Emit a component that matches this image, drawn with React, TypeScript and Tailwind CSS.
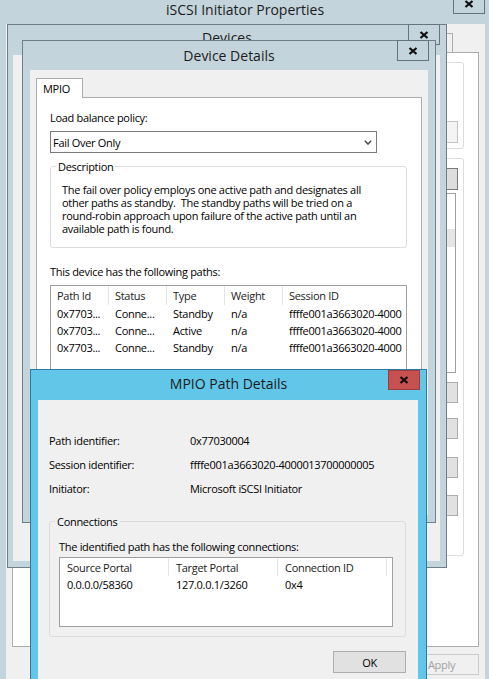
import React from 'react';

type WinProps = {
  pos: string;
  title: string;
  active?: boolean;
  barCls: string;
  titleCls: string;
  closeCls: string;
  clientCls: string;
  children?: React.ReactNode;
};

const CloseGlyph = () => (
  <svg width="10" height="8" viewBox="0 0 10 8" className="block">
    <path d="M1.5 1 L8.5 7 M8.5 1 L1.5 7" stroke="#101010" strokeWidth="2.3" fill="none" />
  </svg>
);

const Chevron = () => (
  <svg width="8" height="5" viewBox="0 0 8 5" className="block">
    <path d="M0.8 0.8 L4 4 L7.2 0.8" stroke="#4a4a4a" strokeWidth="1.5" fill="none" />
  </svg>
);

function Win({ pos, title, active, barCls, titleCls, closeCls, clientCls, children }: WinProps) {
  return (
    <div className={`absolute isolate flex flex-col border ${active ? 'border-[#2a7da0] bg-[#62c6e8]' : 'border-[#6f7f87] bg-[#c3d4dc]'} ${pos}`}>
      <div className={`grid shrink-0 grid-cols-[1fr_auto_1fr] items-start ${barCls}`}>
        <div />
        <div className={`whitespace-nowrap text-[14px] leading-[20px] tracking-normal text-[#1b1b1b] ${titleCls}`}>{title}</div>
        <div className={`flex justify-end ${closeCls}`}>
          <div
            className={
              active
                ? 'flex h-[20px] w-[32px] items-center justify-center border border-[#9c3c3c] bg-[#c75050]'
                : 'flex h-[21px] w-[32px] items-center justify-center border border-[#65747c] bg-[#c3d4dc]'
            }
          >
            <CloseGlyph />
          </div>
        </div>
      </div>
      <div className={`min-h-0 flex-1 overflow-hidden bg-[#f0f0f0] ${clientCls}`}>{children}</div>
    </div>
  );
}

function Btn({ label, cls }: { label?: string; cls: string }) {
  return <div className={`flex shrink-0 items-center justify-center border ${cls}`}>{label}</div>;
}

const pathCols = ['Path Id', 'Status', 'Type', 'Weight', 'Session ID'];
const pathRows = [
  ['0x7703...', 'Conne...', 'Standby', 'n/a', 'ffffe001a3663020-4000'],
  ['0x7703...', 'Conne...', 'Active', 'n/a', 'ffffe001a3663020-4000'],
  ['0x7703...', 'Conne...', 'Standby', 'n/a', 'ffffe001a3663020-4000'],
];

const connCols = ['Source Portal', 'Target Portal', 'Connection ID'];
const connRows = [['0.0.0.0/58360', '127.0.0.1/3260', '0x4']];

export default function App() {
  return (
    <div className="relative h-[679px] w-[489px] overflow-hidden bg-[#c3d4dc] font-['Open_Sans','Noto_Sans',sans-serif] text-[11px] leading-[13px] tracking-[-0.3px] text-black">
      {/* iSCSI Initiator Properties */}
      <Win
        pos="left-[-2px] top-[-8px] h-[720px] w-[494px]"
        title="iSCSI Initiator Properties"
        barCls="h-[31px]"
        titleCls="mt-[7px]"
        closeCls="mr-[6px]"
        clientCls="ml-[7px] mr-[6px]"
      >
        <div className="flex flex-col px-[6px] pt-[9px]">
          {/* tab strip, mostly covered by the Devices window */}
          <div className="flex h-[19px]">
            <div className="relative z-10 h-[20px] w-[54px] border border-b-0 border-[#acacac] bg-white" />
            <div className="h-[19px] w-[62px] border border-b-0 border-l-0 border-[#acacac]" />
            <div className="h-[19px] w-[96px] border border-b-0 border-l-0 border-[#acacac]" />
            <div className="h-[19px] w-[118px] border border-b-0 border-l-0 border-[#acacac]" />
            <div className="h-[19px] w-[50px] border border-b-0 border-l-0 border-[#acacac]" />
            <div className="h-[19px] w-[61px] border border-b-0 border-l-0 border-[#acacac]" />
          </div>
          <div className="flex h-[595px] flex-col border border-[#acacac] bg-white pl-[7px] pr-[14px] pt-[9px]">
            <div className="flex h-[87px] flex-col items-end justify-end rounded-[3px] border border-[#dcdcdc] pb-[5px] pr-[5px]">
              <Btn cls="h-[22px] w-[90px] border-[#c4c4c4] bg-[#f4f4f4]" />
            </div>
            <div className="mt-[9px] flex h-[398px] flex-col items-end rounded-[3px] border border-[#dcdcdc] pr-[5px]">
              <Btn cls="mt-[9px] h-[22px] w-[75px] border-[#7a7a7a] bg-[#dddddd]" />
              <div className="mr-[2px] mt-[3px] h-[180px] w-[420px] border border-[#a0a0a0] bg-white pt-[35px]">
                <div className="h-[18px] bg-[#e5e5e5]" />
              </div>
              <Btn cls="mt-[9px] h-[21px] w-[75px] border-[#adadad] bg-[#e1e1e1]" />
              <Btn cls="mt-[15px] h-[21px] w-[75px] border-[#adadad] bg-[#e1e1e1]" />
              <Btn cls="mt-[18px] h-[21px] w-[75px] border-[#adadad] bg-[#e1e1e1]" />
              <Btn cls="mt-[17px] h-[21px] w-[75px] border-[#adadad] bg-[#e1e1e1]" />
            </div>
          </div>
          <div className="mt-[7px] flex justify-end gap-[6px]">
            <Btn cls="h-[21px] w-[75px] border-[#adadad] bg-[#e1e1e1]" />
            <Btn cls="h-[21px] w-[75px] border-[#adadad] bg-[#e1e1e1]" />
            <Btn label="Apply" cls="h-[21px] w-[75px] border-[#cbcbcb] bg-[#f0f0f0] text-[#a0a0a0]" />
          </div>
        </div>
      </Win>

      {/* Devices */}
      <Win
        pos="left-[7px] top-[24px] h-[544px] w-[440px]"
        title="Devices"
        barCls="h-[30px]"
        titleCls="mt-[3px]"
        closeCls="mr-[6px] -mt-[1px]"
        clientCls="mb-[6px] ml-[5px] mr-[6px]"
      />

      {/* Device Details */}
      <Win
        pos="left-[22px] top-[40px] h-[483px] w-[414px]"
        title="Device Details"
        barCls="h-[29px]"
        titleCls="mt-[5px]"
        closeCls="mr-[6px] -mt-[1px]"
        clientCls="mb-[7px] mx-[7px]"
      >
        <div className="flex flex-col px-[6px] pt-[8px]">
          <div className="flex h-[19px]">
            <div className="relative z-10 flex h-[20px] w-[47px] items-center border border-b-0 border-[#acacac] bg-white pl-[6px]">MPIO</div>
          </div>
          <div className="flex h-[412px] flex-col border border-[#acacac] bg-white pl-[13px] pt-[13px]">
            <div>Load balance policy:</div>
            <div className="mt-[7px] flex h-[22px] w-[327px] items-center justify-between border border-[#7a7a7a] bg-white pl-[2px] pr-[4px]">
              <span>Fail Over Only</span>
              <Chevron />
            </div>
            <fieldset className="mt-[7px] w-[357px] rounded-[3px] border border-[#dcdcdc] pb-[12px] pt-[10px]">
              <legend className="ml-[5px] px-[2px]">Description</legend>
              <div className="pl-[11px]">
                <div className="whitespace-pre">The fail over policy employs one active path and designates all</div>
                <div className="whitespace-pre">other paths as standby.  The standby paths will be tried on a</div>
                <div className="whitespace-pre">round-robin approach upon failure of the active path until an</div>
                <div className="whitespace-pre">available path is found.</div>
              </div>
            </fieldset>
            <div className="mt-[17px]">This device has the following paths:</div>
            <div className="mt-[7px] h-[92px] w-[357px] overflow-hidden border border-[#a0a0a0] bg-white">
              <div className="flex h-[19px] text-[#222]">
                {pathCols.map((c, i) => (
                  <div
                    key={c}
                    className={`flex shrink-0 items-center border-r border-[#e5e5e5] pl-[6px] ${i === 4 ? 'w-[124px]' : 'w-[58px]'}`}
                  >
                    {c}
                  </div>
                ))}
              </div>
              {pathRows.map((r, ri) => (
                <div key={ri} className="flex h-[17px] items-center whitespace-nowrap">
                  {r.map((v, i) => (
                    <div key={i} className={`shrink-0 pl-[6px] ${i === 4 ? 'w-[123px]' : 'w-[58px]'}`}>
                      {v}
                    </div>
                  ))}
                </div>
              ))}
            </div>
          </div>
        </div>
      </Win>

      {/* MPIO Path Details */}
      <Win
        pos="left-[30px] top-[369px] h-[340px] w-[397px]"
        title="MPIO Path Details"
        active
        barCls="h-[30px]"
        titleCls="mt-[4px]"
        closeCls="mr-[6px]"
        clientCls="ml-[7px] mr-[8px]"
      >
        <div className="flex flex-col px-[11px] pt-[28px]">
          <div className="grid auto-rows-[24px] grid-cols-[141px_1fr] items-center">
            <div>Path identifier:</div>
            <div>0x77030004</div>
            <div>Session identifier:</div>
            <div>ffffe001a3663020-4000013700000005</div>
            <div>Initiator:</div>
            <div>Microsoft iSCSI Initiator</div>
          </div>
          <fieldset className="mt-[15px] w-[357px] rounded-[3px] border border-[#dcdcdc] pb-[9px] pt-[12px]">
            <legend className="ml-[5px] px-[2px]">Connections</legend>
            <div className="pl-[9px]">
              <div>The identified path has the following connections:</div>
              <div className="mt-[4px] h-[70px] w-[334px] overflow-hidden border border-[#a0a0a0] bg-white">
                <div className="flex h-[18px] text-[#222]">
                  {connCols.map((c) => (
                    <div key={c} className="flex w-[109px] shrink-0 items-center border-r border-[#e5e5e5] pl-[7px]">
                      {c}
                    </div>
                  ))}
                </div>
                {connRows.map((r, ri) => (
                  <div key={ri} className="flex h-[17px] items-center whitespace-nowrap">
                    {r.map((v, i) => (
                      <div key={i} className="w-[109px] shrink-0 pl-[7px]">
                        {v}
                      </div>
                    ))}
                  </div>
                ))}
              </div>
            </div>
          </fieldset>
          <div className="mt-[14px] flex w-[357px] justify-end">
            <Btn label="OK" cls="h-[22px] w-[73px] border-[#adadad] bg-[#e1e1e1]" />
          </div>
        </div>
      </Win>
    </div>
  );
}
